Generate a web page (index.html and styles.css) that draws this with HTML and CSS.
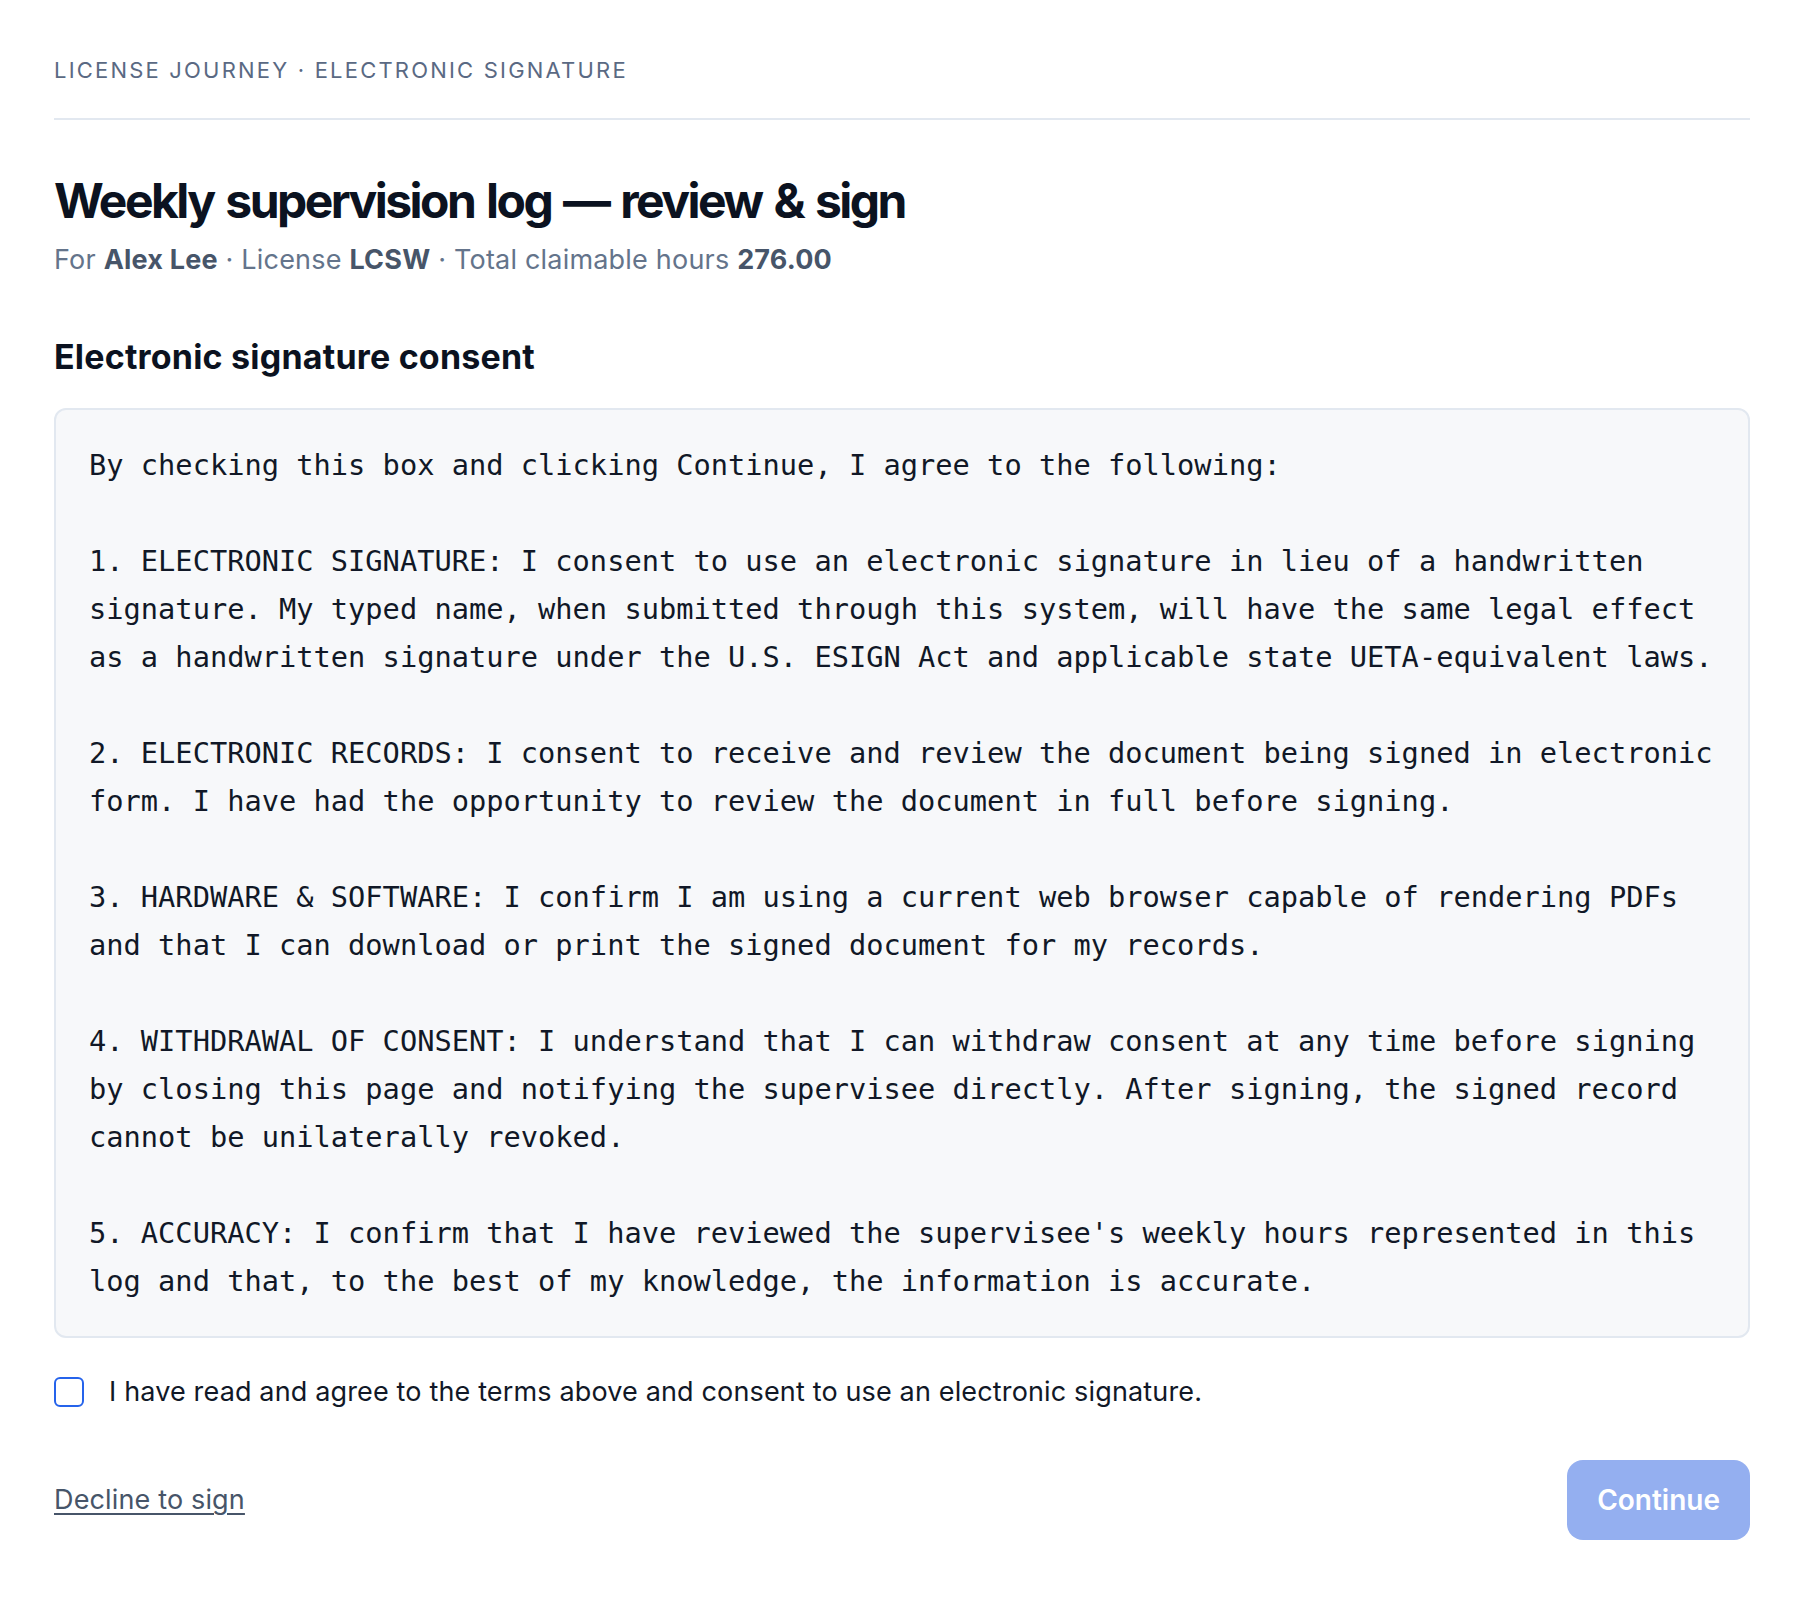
FILE: index.html
```html
<!DOCTYPE html>
<html lang="en">
<head>
<meta charset="utf-8">
<title>Weekly supervision log — review &amp; sign</title>
<link rel="stylesheet" href="styles.css">
</head>
<body>
<main class="page">
  <header class="crumbs">LICENSE JOURNEY · ELECTRONIC SIGNATURE</header>

  <section class="intro">
    <h1 class="title">Weekly supervision log — review &amp; sign</h1>
    <p class="meta">For <strong>Alex Lee</strong> · License <strong>LCSW</strong> · Total claimable hours <strong>276.00</strong></p>
  </section>

  <h2 class="section-title">Electronic signature consent</h2>

  <pre class="terms">By checking this box and clicking Continue, I agree to the following:

1. ELECTRONIC SIGNATURE: I consent to use an electronic signature in lieu of a handwritten
signature. My typed name, when submitted through this system, will have the same legal effect
as a handwritten signature under the U.S. ESIGN Act and applicable state UETA-equivalent laws.

2. ELECTRONIC RECORDS: I consent to receive and review the document being signed in electronic
form. I have had the opportunity to review the document in full before signing.

3. HARDWARE &amp; SOFTWARE: I confirm I am using a current web browser capable of rendering PDFs
and that I can download or print the signed document for my records.

4. WITHDRAWAL OF CONSENT: I understand that I can withdraw consent at any time before signing
by closing this page and notifying the supervisee directly. After signing, the signed record
cannot be unilaterally revoked.

5. ACCURACY: I confirm that I have reviewed the supervisee's weekly hours represented in this
log and that, to the best of my knowledge, the information is accurate.</pre>

  <label class="agree">
    <input type="checkbox" class="agree-box">
    <span class="agree-text">I have read and agree to the terms above and consent to use an electronic signature.</span>
  </label>

  <div class="actions">
    <a href="#" class="decline">Decline to sign</a>
    <button type="button" class="continue" disabled>Continue</button>
  </div>
</main>
</body>
</html>
```

FILE: styles.css
```css
* { box-sizing: border-box; }

html, body {
  margin: 0;
  padding: 0;
  background: #ffffff;
}

body {
  font-family: "Inter", "Noto Sans", "Liberation Sans", sans-serif;
  color: #0f172a;
}

.page {
  padding: 54px 56px 54px 54px;
}

.crumbs {
  font-size: 22px;
  line-height: 32px;
  letter-spacing: 2.2px;
  color: #5a6983;
  padding-bottom: 32px;
  border-bottom: 2px solid #e2e8f0;
}

.intro {
  margin-top: 52px;
}

.title {
  margin: 0;
  font-size: 48px;
  line-height: 58px;
  font-weight: 700;
  letter-spacing: -2.55px;
  word-spacing: 3px;
  color: #0b1220;
}

.meta {
  margin: 12px 0 0;
  font-size: 27px;
  line-height: 36px;
  letter-spacing: 0.2px;
  color: #64748b;
}

.meta strong {
  color: #475569;
  font-weight: 700;
}

.section-title {
  margin: 58px 0 0;
  font-size: 34px;
  line-height: 41px;
  font-weight: 700;
  letter-spacing: 0.2px;
  color: #0b1220;
}

.terms {
  margin: 31px 0 0;
  padding: 31px 33px;
  background: #f7f8fa;
  border: 2px solid #e2e8f0;
  border-radius: 12px;
  font-family: "DejaVu Sans Mono", "Liberation Mono", monospace;
  font-size: 28.7px;
  line-height: 48px;
  color: #111827;
  white-space: pre-wrap;
}

.agree {
  margin-top: 36px;
  display: flex;
  align-items: center;
  gap: 25px;
  cursor: pointer;
}

.agree-box {
  appearance: none;
  -webkit-appearance: none;
  margin: 0;
  width: 30px;
  height: 30px;
  border: 2.5px solid #2563eb;
  border-radius: 6px;
  background: #ffffff;
  flex: none;
}

.agree-text {
  font-size: 27px;
  line-height: 36px;
  letter-spacing: 0.15px;
  color: #111827;
}

.actions {
  margin-top: 50px;
  display: flex;
  align-items: center;
  justify-content: space-between;
}

.decline {
  font-size: 27px;
  line-height: 36px;
  letter-spacing: 0.15px;
  color: #475569;
  text-decoration: underline;
  text-underline-offset: 4px;
  text-decoration-thickness: 2px;
}

.continue {
  height: 80px;
  padding: 0 30px;
  border: none;
  border-radius: 16px;
  background: #94aff0;
  color: #ffffff;
  font-family: "Inter", "Noto Sans", sans-serif;
  font-size: 28px;
  font-weight: 600;
}
```
